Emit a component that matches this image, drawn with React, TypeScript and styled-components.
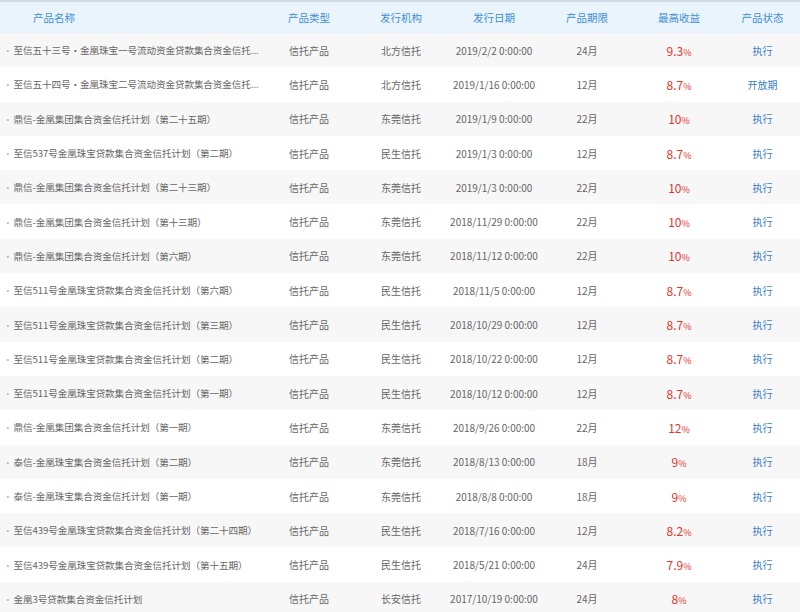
import React from "react";
import styled, { createGlobalStyle } from "styled-components";

const Global = createGlobalStyle`
  body { margin: 0; background: #fff; font-family: "Noto Sans CJK SC", "Liberation Sans", sans-serif; }
`;

const cols = "263px 92px 92px 94px 92px 92px 75px";

const Table = styled.div`
  width: 800px;
  border-top: 2px solid #cfdbe6;
`;

const Head = styled.div`
  display: grid;
  grid-template-columns: ${cols};
  height: 31px;
  align-items: center;
  background: #eaf4fc;
  color: #3d8fd6;
  font-size: 10.5px;
`;

const HCell = styled.div<{ $left?: boolean }>`
  text-align: ${(p) => (p.$left ? "left" : "center")};
  padding-left: ${(p) => (p.$left ? "33px" : "0")};
`;

const Row = styled.div<{ $odd: boolean }>`
  display: grid;
  grid-template-columns: ${cols};
  height: 34.3px;
  align-items: center;
  background: ${(p) => (p.$odd ? "#f7f7f7" : "#fff")};
  color: #666;
  font-size: 10px;
`;

const Cell = styled.div`
  text-align: center;
  white-space: nowrap;
`;

const Name = styled.div`
  padding-left: 3px;
  white-space: nowrap;
  overflow: hidden;
  font-size: 9.6px;
  letter-spacing: -0.1px;
  &::before { content: "·"; color: #bbb; margin-right: 1px; }
`;

const Rate = styled.div`
  text-align: center;
  color: #e0362c;
  font-size: 12px;
  span { font-size: 9px; }
`;

const Status = styled.div`
  text-align: center;
  color: #3a7fc8;
  font-size: 10px;
`;

const data: [string, string, string, string, string, string][] = [
  ["至信五十三号·金凰珠宝一号流动资金贷款集合资金信托...", "北方信托", "2019/2/2 0:00:00", "24月", "9.3", "执行"],
  ["至信五十四号·金凰珠宝二号流动资金贷款集合资金信托...", "北方信托", "2019/1/16 0:00:00", "12月", "8.7", "开放期"],
  ["鼎信-金凰集团集合资金信托计划（第二十五期）", "东莞信托", "2019/1/9 0:00:00", "22月", "10", "执行"],
  ["至信537号金凰珠宝贷款集合资金信托计划（第二期）", "民生信托", "2019/1/3 0:00:00", "12月", "8.7", "执行"],
  ["鼎信-金凰集团集合资金信托计划（第二十三期）", "东莞信托", "2019/1/3 0:00:00", "22月", "10", "执行"],
  ["鼎信-金凰集团集合资金信托计划（第十三期）", "东莞信托", "2018/11/29 0:00:00", "22月", "10", "执行"],
  ["鼎信-金凰集团集合资金信托计划（第六期）", "东莞信托", "2018/11/12 0:00:00", "22月", "10", "执行"],
  ["至信511号金凰珠宝贷款集合资金信托计划（第六期）", "民生信托", "2018/11/5 0:00:00", "12月", "8.7", "执行"],
  ["至信511号金凰珠宝贷款集合资金信托计划（第三期）", "民生信托", "2018/10/29 0:00:00", "12月", "8.7", "执行"],
  ["至信511号金凰珠宝贷款集合资金信托计划（第二期）", "民生信托", "2018/10/22 0:00:00", "12月", "8.7", "执行"],
  ["至信511号金凰珠宝贷款集合资金信托计划（第一期）", "民生信托", "2018/10/12 0:00:00", "12月", "8.7", "执行"],
  ["鼎信-金凰集团集合资金信托计划（第一期）", "东莞信托", "2018/9/26 0:00:00", "22月", "12", "执行"],
  ["泰信-金凰珠宝集合资金信托计划（第二期）", "东莞信托", "2018/8/13 0:00:00", "18月", "9", "执行"],
  ["泰信-金凰珠宝集合资金信托计划（第一期）", "东莞信托", "2018/8/8 0:00:00", "18月", "9", "执行"],
  ["至信439号金凰珠宝贷款集合资金信托计划（第二十四期）", "民生信托", "2018/7/16 0:00:00", "12月", "8.2", "执行"],
  ["至信439号金凰珠宝贷款集合资金信托计划（第十五期）", "民生信托", "2018/5/21 0:00:00", "24月", "7.9", "执行"],
  ["金凰3号贷款集合资金信托计划", "长安信托", "2017/10/19 0:00:00", "24月", "8", "执行"],
];

export default function App() {
  return (
    <>
      <Global />
      <Table>
        <Head>
          <HCell $left>产品名称</HCell>
          <HCell>产品类型</HCell>
          <HCell>发行机构</HCell>
          <HCell>发行日期</HCell>
          <HCell>产品期限</HCell>
          <HCell>最高收益</HCell>
          <HCell>产品状态</HCell>
        </Head>
        {data.map((d, i) => (
          <Row key={i} $odd={i % 2 === 0}>
            <Name>{d[0]}</Name>
            <Cell>信托产品</Cell>
            <Cell>{d[1]}</Cell>
            <Cell>{d[2]}</Cell>
            <Cell>{d[3]}</Cell>
            <Rate>{d[4]}<span>%</span></Rate>
            <Status>{d[5]}</Status>
          </Row>
        ))}
      </Table>
    </>
  );
}
